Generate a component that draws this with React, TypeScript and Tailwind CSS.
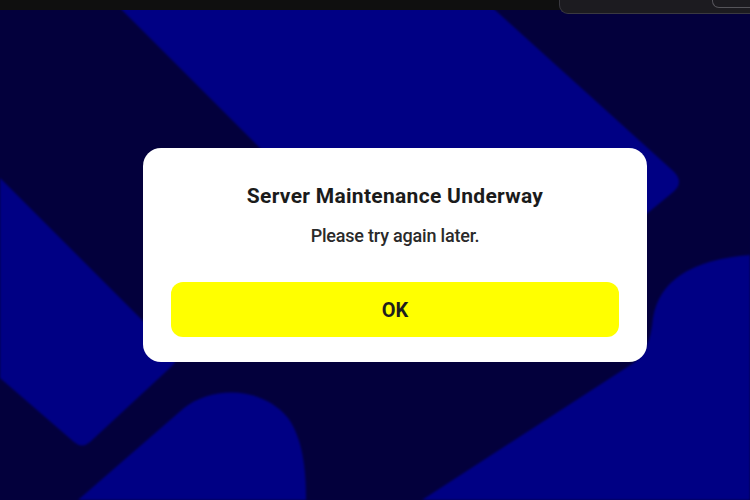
import React from "react";

// Decorative backdrop: dark navy field with large rounded blue bands.
function Backdrop() {
  return (
    <svg
      className="absolute inset-0 h-full w-full"
      viewBox="0 0 750 500"
      preserveAspectRatio="none"
      aria-hidden="true"
    >
      <defs>
        <filter id="soft" x="-5%" y="-5%" width="110%" height="110%">
          <feGaussianBlur stdDeviation="1" />
        </filter>
      </defs>
      <g fill="#000084" filter="url(#soft)">
        {/* big diagonal band from the top */}
        <path d="M 112 0 L 484 0 L 672 170 Q 686 182 672 193 L 478 352 Q 470 358 462 350 Z" />
        {/* band on the left edge */}
        <path d="M 0 178 L 172 350 Q 180 358 172 366 L 90 442 Q 82 449 74 442 L 0 378 Z" />
        {/* rounded tab at the bottom */}
        <path d="M 78 500 L 184 408 C 212 386 262 386 288 418 C 302 438 306 466 306 500 Z" />
        {/* large curved shape on the right */}
        <path d="M 422 500 L 632 364 Q 650 352 653 318 Q 662 262 750 255 L 750 500 Z" />
      </g>
    </svg>
  );
}

export default function App() {
  return (
    <div
      className="relative flex h-[500px] w-[750px] flex-col overflow-hidden bg-[#03003c]"
      style={{ fontFamily: 'Roboto, "Liberation Sans", sans-serif' }}
    >
      <Backdrop />

      {/* window chrome strip */}
      <div className="relative z-10 h-[10px] w-full shrink-0 bg-[#0f0f0f]" />
      <div className="absolute right-0 top-0 z-20 h-[14px] w-[191px] rounded-bl-[9px] border-b border-l border-[#3a3940] bg-[#1c1b20]">
        <div className="absolute right-0 top-0 h-[8px] w-[38px] rounded-bl-[7px] border-b border-l border-[#55545a] bg-[#1c1b20]" />
      </div>

      {/* dialog */}
      <div className="relative z-10 flex flex-1 items-center justify-center pl-[40px]">
        <div className="flex w-[504px] flex-col items-center rounded-[18px] bg-white px-[28px] pb-[25px] pt-[34px]">
          <h1 className="h-[28px] text-[21px] font-bold leading-[28px] tracking-[0.3px] text-[#1b1b1b]">
            Server Maintenance Underway
          </h1>
          <p className="mt-[14px] h-[24px] text-[18px] font-medium leading-[24px] tracking-[-0.2px] text-[#2a2a2a]">
            Please try again later.
          </p>
          <button
            type="button"
            className="mt-[34px] flex h-[55px] w-full items-center justify-center rounded-[12px] bg-[#ffff00] text-[20px] font-bold text-[#1e1e1e]"
          >
            OK
          </button>
        </div>
      </div>
    </div>
  );
}
